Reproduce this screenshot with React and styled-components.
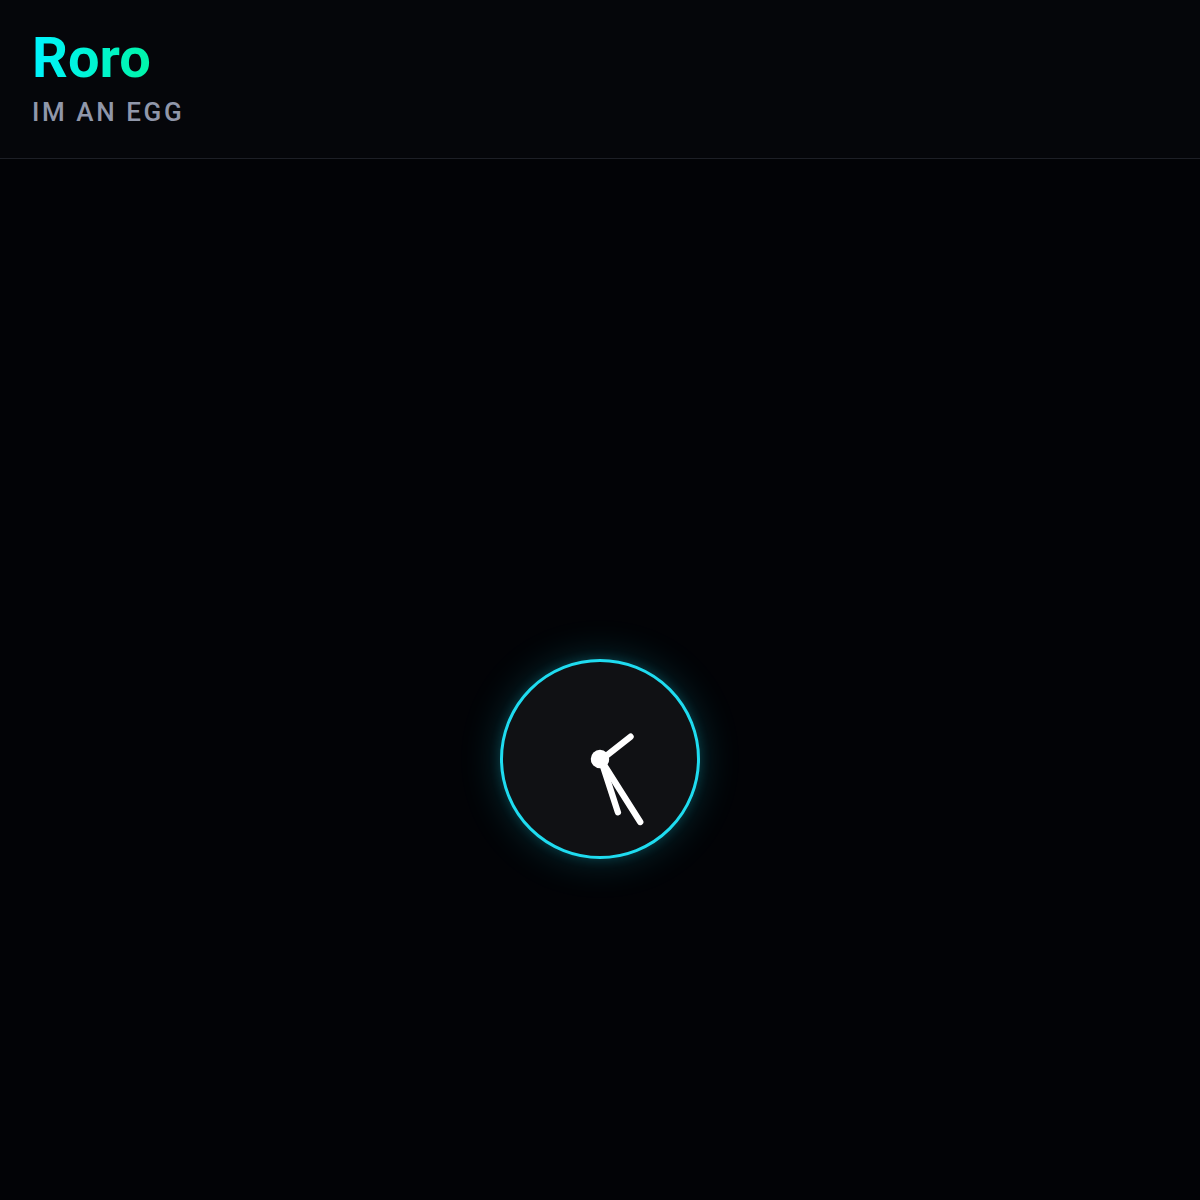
import React from 'react'
import styled, { createGlobalStyle } from 'styled-components'

const GlobalStyle = createGlobalStyle`
  html, body {
    margin: 0;
    padding: 0;
    background: #020306;
    font-family: Roboto, "Noto Sans", sans-serif;
  }
`

const Header = styled.header`
  padding: 25px 32px 30px;
  background: #05060a;
  border-bottom: 1px solid #1d1f26;
`

const Title = styled.h1`
  margin: 0;
  font-size: 56px;
  line-height: 1.2;
  font-weight: 700;
  background: linear-gradient(90deg, #00f4ff 0%, #00f5a8 100%);
  -webkit-background-clip: text;
  background-clip: text;
  color: transparent;
  display: inline-block;
`

const Subtitle = styled.p`
  margin: 5px 0 0;
  font-size: 26px;
  line-height: 1.2;
  font-weight: 500;
  letter-spacing: 0.1em;
  color: #9097aa;
`

const Main = styled.main`
  min-height: 100vh;
  display: flex;
  align-items: center;
  justify-content: center;
`

const Face = styled.div`
  width: 200px;
  height: 200px;
  box-sizing: border-box;
  border-radius: 50%;
  border: 3px solid #1fdcf0;
  background: #101114;
  box-shadow: 0 0 40px rgba(31, 214, 238, 0.22), 0 0 12px rgba(31, 214, 238, 0.2);
  display: flex;
  align-items: center;
  justify-content: center;
`

const hands = [
  { x: 131.5, y: 77 },
  { x: 118.5, y: 155 },
  { x: 141.5, y: 165 },
]

const Clock = () => (
  <Face>
    <svg width="200" height="200" viewBox="0 0 200 200">
      {hands.map((h, i) => (
        <line
          key={i}
          x1="101"
          y1="101"
          x2={h.x}
          y2={h.y}
          stroke="#fff"
          strokeWidth="6.5"
          strokeLinecap="round"
        />
      ))}
      <circle cx="100" cy="100" r="9.5" fill="#fff" />
    </svg>
  </Face>
)

export default function App() {
  return (
    <>
      <GlobalStyle />
      <Header>
        <Title>Roro</Title>
        <Subtitle>IM AN EGG</Subtitle>
      </Header>
      <Main>
        <Clock />
      </Main>
    </>
  )
}
